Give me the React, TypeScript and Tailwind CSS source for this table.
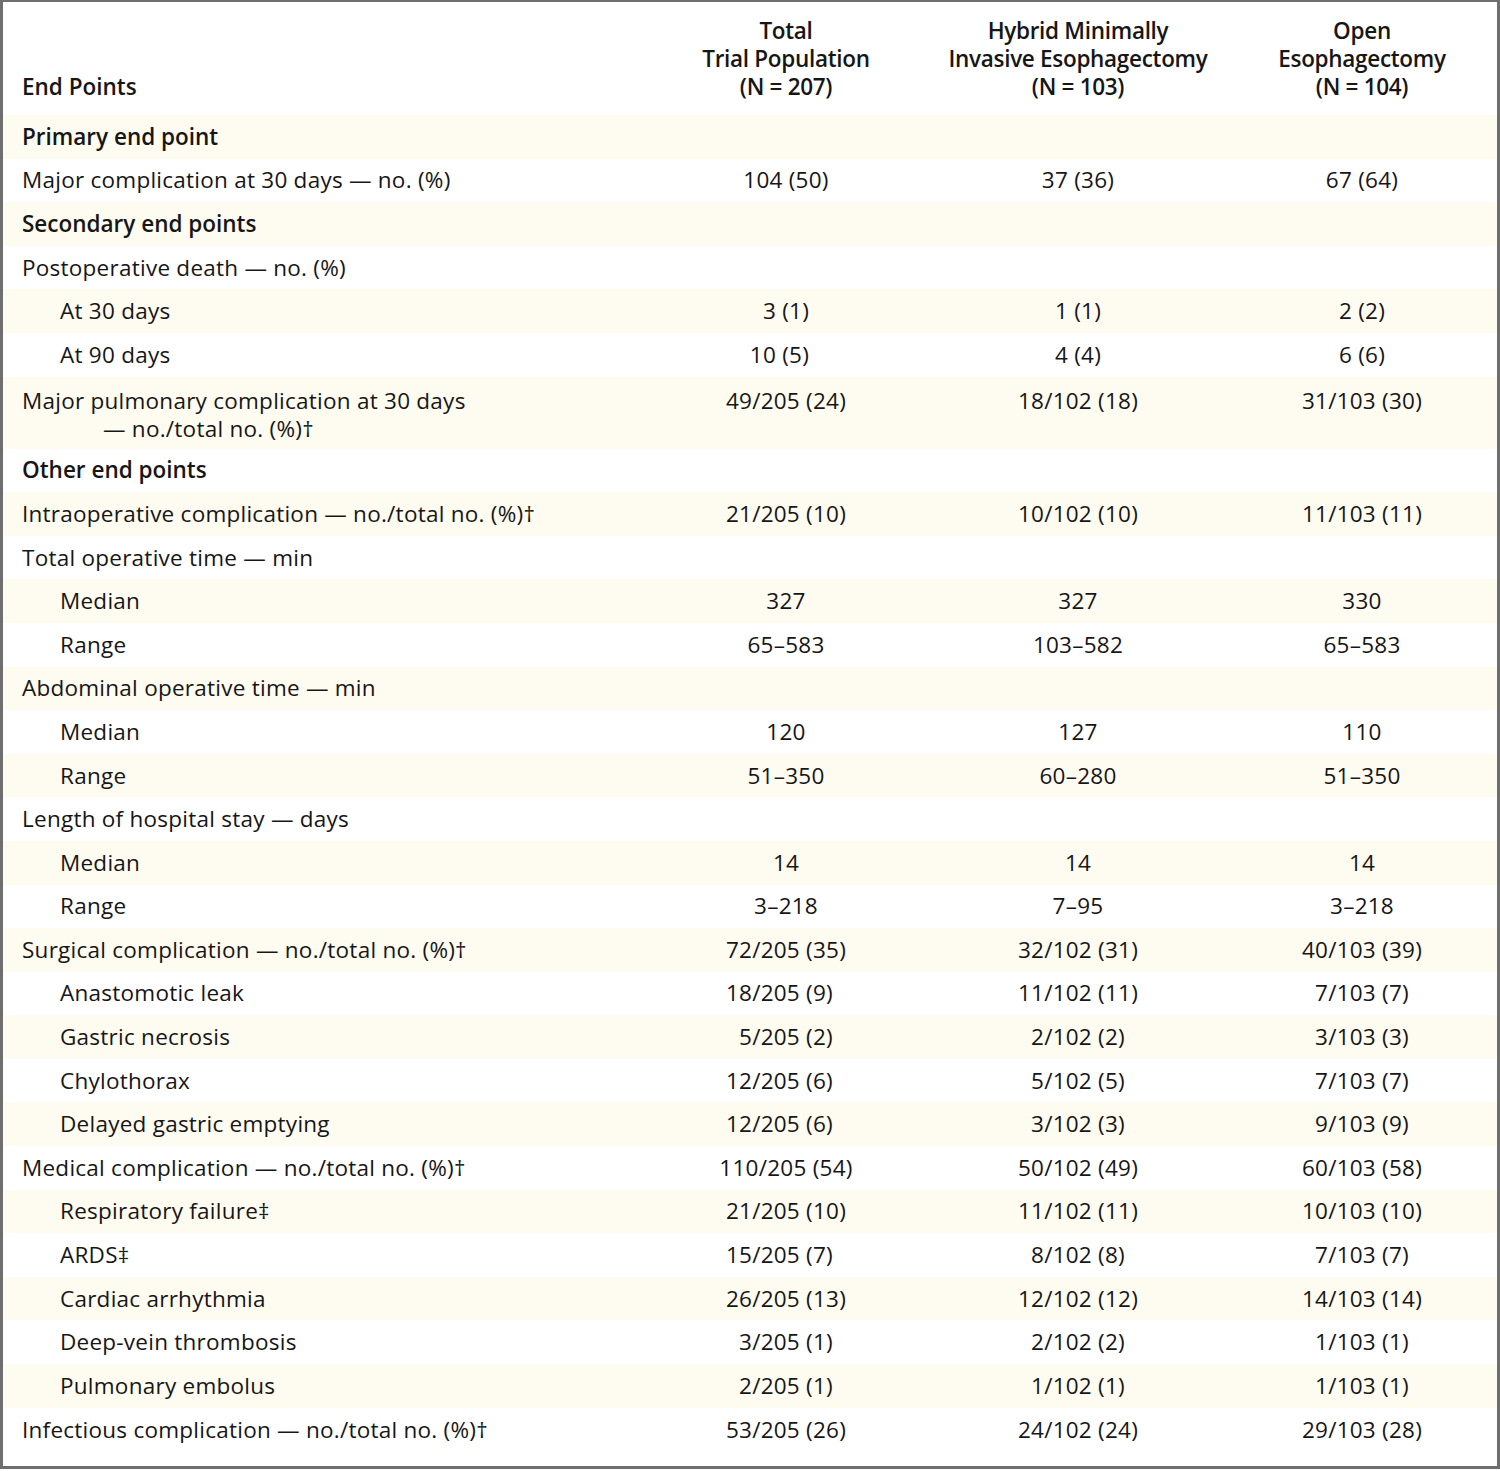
import React from "react";

type RowKind = "section" | "main" | "sub";

interface TableRow {
  label: string;
  kind: RowKind;
  values?: [string, string, string];
  wrap?: string; // second line for long labels
}

const rows: TableRow[] = [
  { label: "Primary end point", kind: "section" },
  { label: "Major complication at 30 days — no. (%)", kind: "main", values: ["104 (50)", "37 (36)", "67 (64)"] },
  { label: "Secondary end points", kind: "section" },
  { label: "Postoperative death — no. (%)", kind: "main" },
  { label: "At 30 days", kind: "sub", values: ["3 (1)", "1 (1)", "2 (2)"] },
  { label: "At 90 days", kind: "sub", values: ["10 (5)", "4 (4)", "6 (6)"] },
  {
    label: "Major pulmonary complication at 30 days",
    wrap: "— no./total no. (%)†",
    kind: "main",
    values: ["49/205 (24)", "18/102 (18)", "31/103 (30)"],
  },
  { label: "Other end points", kind: "section" },
  { label: "Intraoperative complication — no./total no. (%)†", kind: "main", values: ["21/205 (10)", "10/102 (10)", "11/103 (11)"] },
  { label: "Total operative time — min", kind: "main" },
  { label: "Median", kind: "sub", values: ["327", "327", "330"] },
  { label: "Range", kind: "sub", values: ["65–583", "103–582", "65–583"] },
  { label: "Abdominal operative time — min", kind: "main" },
  { label: "Median", kind: "sub", values: ["120", "127", "110"] },
  { label: "Range", kind: "sub", values: ["51–350", "60–280", "51–350"] },
  { label: "Length of hospital stay — days", kind: "main" },
  { label: "Median", kind: "sub", values: ["14", "14", "14"] },
  { label: "Range", kind: "sub", values: ["3–218", "7–95", "3–218"] },
  { label: "Surgical complication — no./total no. (%)†", kind: "main", values: ["72/205 (35)", "32/102 (31)", "40/103 (39)"] },
  { label: "Anastomotic leak", kind: "sub", values: ["18/205 (9)", "11/102 (11)", "7/103 (7)"] },
  { label: "Gastric necrosis", kind: "sub", values: ["5/205 (2)", "2/102 (2)", "3/103 (3)"] },
  { label: "Chylothorax", kind: "sub", values: ["12/205 (6)", "5/102 (5)", "7/103 (7)"] },
  { label: "Delayed gastric emptying", kind: "sub", values: ["12/205 (6)", "3/102 (3)", "9/103 (9)"] },
  { label: "Medical complication — no./total no. (%)†", kind: "main", values: ["110/205 (54)", "50/102 (49)", "60/103 (58)"] },
  { label: "Respiratory failure‡", kind: "sub", values: ["21/205 (10)", "11/102 (11)", "10/103 (10)"] },
  { label: "ARDS‡", kind: "sub", values: ["15/205 (7)", "8/102 (8)", "7/103 (7)"] },
  { label: "Cardiac arrhythmia", kind: "sub", values: ["26/205 (13)", "12/102 (12)", "14/103 (14)"] },
  { label: "Deep-vein thrombosis", kind: "sub", values: ["3/205 (1)", "2/102 (2)", "1/103 (1)"] },
  { label: "Pulmonary embolus", kind: "sub", values: ["2/205 (1)", "1/102 (1)", "1/103 (1)"] },
  { label: "Infectious complication — no./total no. (%)†", kind: "main", values: ["53/205 (26)", "24/102 (24)", "29/103 (28)"] },
];

const headers = [
  ["Total", "Trial Population", "(N = 207)"],
  ["Hybrid Minimally", "Invasive Esophagectomy", "(N = 103)"],
  ["Open", "Esophagectomy", "(N = 104)"],
];

// pads single digits with an invisible 0 so counts line up like in the print table
const Value = ({ text }: { text: string }) => {
  const m = text.match(/^(\d+)(\/\d+)? \((\d+)\)$/);
  if (!m) return <span>{text}</span>;
  const [, num, total, pct] = m;
  return (
    <span className="whitespace-pre">
      {num.length === 1 && <span className="invisible">0</span>}
      {num}
      {total ?? ""} ({pct})
      {pct.length === 1 && <span className="invisible">0</span>}
    </span>
  );
};

export default function App() {
  return (
    <div
      className="w-[1500px] bg-white text-[#161616] border-t-2 border-x-[3px] border-b-[3px] border-[#6e6e6e] text-[22.5px] leading-[28px] tracking-[0.25px]"
      style={{ fontFamily: "'Open Sans', Lato, sans-serif" }}
    >
      {/* Header */}
      <div className="grid grid-cols-[640px_286px_298px_1fr] pt-[15px] pb-[14px] font-semibold">
        <div className="flex items-end pl-[19px] tracking-normal">End Points</div>
        {headers.map((h, i) => (
          <div key={i} className="flex flex-col items-center text-center tracking-[-0.3px]">
            {h.map((line) => (
              <span key={line}>{line}</span>
            ))}
          </div>
        ))}
      </div>

      {/* Body */}
      {rows.map((row, i) => {
        const last = i === rows.length - 1;
        const bg = i % 2 === 0 ? "bg-[#fefcf0]" : "bg-white";
        const labelPad = row.kind === "sub" ? "pl-[57px]" : "pl-[19px]";
        return (
          <div
            key={i}
            className={`grid grid-cols-[640px_286px_298px_1fr] ${bg} ${
              row.wrap ? "h-[72px] items-start pt-[10px]" : last ? "h-[58px] items-start pt-[8px]" : "h-[43.6px] items-center"
            }`}
          >
            <div className={`${labelPad} ${row.kind === "section" ? "font-semibold tracking-normal" : ""}`}>
              <div>{row.label}</div>
              {row.wrap && <div className="pl-[81px]">{row.wrap}</div>}
            </div>
            {row.values?.map((v, j) => (
              <div key={j} className="text-center">
                <Value text={v} />
              </div>
            ))}
          </div>
        );
      })}
    </div>
  );
}
